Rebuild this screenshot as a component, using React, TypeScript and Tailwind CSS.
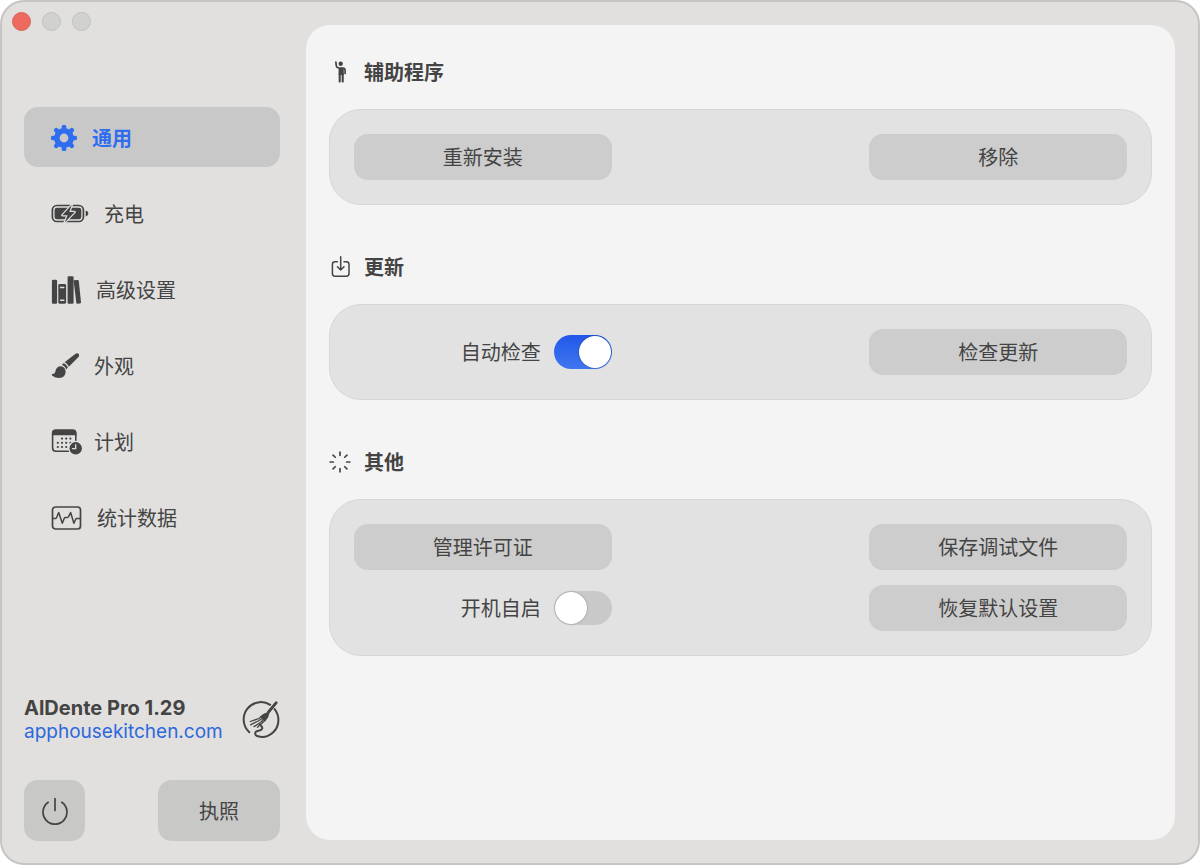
import React, { useState } from 'react';
import { clsx } from 'clsx';

const GearIcon = () => (
  <svg width="26" height="26" viewBox="-13 -13 26 26" stroke="currentColor" fill="none" className="shrink-0">
    <circle r="7.2" strokeWidth="5.6" />
    {[0, 45, 90, 135, 180, 225, 270, 315].map((angle) => (
      <path key={angle} d="M0 -9V-11" strokeWidth="4.6" strokeLinecap="round" transform={`rotate(${angle})`} />
    ))}
  </svg>
);

const BatteryIcon = () => (
  <svg width="38" height="19" viewBox="0 0 38 19" fill="currentColor" className="shrink-0">
    <rect x="1.4" y="1.5" width="31" height="16" rx="4.5" fill="none" stroke="currentColor" strokeWidth="1.7" />
    <rect x="3.6" y="3.7" width="26.7" height="11.6" rx="2.4" />
    <path d="M34.7 6.6c1.6.4 2.6 1.5 2.6 2.9s-1 2.5-2.6 2.9z" />
    <path
      d="M20.7 1L11.3 11.2h5.3l-2.9 7.2L23.7 8h-5.4z"
      stroke="#e1e0de"
      strokeWidth="2.4"
      paintOrder="stroke"
      strokeLinejoin="round"
    />
  </svg>
);

const BooksIcon = () => (
  <svg width="30" height="30" viewBox="0 0 30 30" fill="currentColor" className="shrink-0">
    <rect x="0.9" y="4.7" width="5.2" height="24" rx="1.2" />
    <rect x="7.3" y="9" width="7.8" height="19.7" rx="1.4" />
    <path d="M9.6 12.4h3.2M9.6 25.3h3.2" stroke="#e1e0de" strokeWidth="1.5" strokeLinecap="round" />
    <rect x="16.6" y="1.3" width="6" height="27.4" rx="1.2" />
    <path d="M22.6 5.3l4.1-.4q1 0 1.1 1l2.2 21.3q.1 1.1-1 1.2l-2.6.3q-1 0-1.1-1z" />
  </svg>
);

const BrushIcon = () => (
  <svg width="28" height="28" viewBox="0 0 28 28" fill="currentColor" className="shrink-0">
    <path d="M27.6 1.8c-.9-.9-2.3-.8-3.4.1L13.6 10.3c1.9.8 3.3 2.2 4.2 4.5L27.5 4.9c.9-1 .9-2.3.1-3.1z" />
    <path d="M12.6 11.2l-1.9 1.6c2.2.8 3.7 2.3 4.5 4.7l1.7-1.9c-.8-2.2-2.2-3.7-4.3-4.4z" />
    <path d="M9.7 14.2c-2.9 0-4.9 2.1-5.2 4.800-.2 1.900-1.300 2.900-3.100 3.100-.8.1-.9.8-.3 1.300 4 3.300 9.800 3.300 12.200.3 2.800-3.500 1-9.500-3.600-9.500z" />
  </svg>
);

const CalendarIcon = () => (
  <svg width="32" height="28" viewBox="0 0 32 28" fill="currentColor" className="-mr-1 shrink-0">
    <rect x="1.6" y="2.4" width="23.2" height="20.8" rx="3.2" fill="none" stroke="currentColor" strokeWidth="1.6" />
    <path d="M1 7.2V5Q1 1.6 4.5 1.6H22Q25.400 1.6 25.400 5V7.200z" />
    {[
      [11, 10.6], [15.2, 10.6], [19.4, 10.6],
      [6.8, 14.8], [11, 14.8], [15.2, 14.8], [19.4, 14.8],
      [6.8, 19], [11, 19], [15.2, 19],
    ].map(([cx, cy]) => (
      <circle key={`${cx}-${cy}`} cx={cx} cy={cy} r="1.1" />
    ))}
    <circle cx="24.7" cy="20.3" r="7.5" fill="#e1e0de" />
    <circle cx="24.7" cy="20.3" r="6.2" />
    <path d="M24.7 16.7v4h-3.2" fill="none" stroke="#e1e0de" strokeWidth="1.3" strokeLinecap="round" />
  </svg>
);

const ChartIcon = () => (
  <svg width="31" height="24" viewBox="0 0 31 24" fill="none" stroke="currentColor" strokeWidth="1.7" className="shrink-0">
    <rect x="1.5" y="1" width="28" height="22" rx="3" />
    <path
      d="M1.500 12.500H4.500Q5.200 12.500 5.500 11.800L7.700 6.500L11.300 17.300L13.300 12.200Q13.600 11.500 14.300 11.500H16.400Q17.200 11.500 17.500 10.800L19.600 6.500L22.900 17.300L24.700 13.200Q25 12.500 25.700 12.500H29.500"
      strokeWidth="1.5"
      strokeLinejoin="round"
    />
  </svg>
);

const PersonIcon = () => (
  <svg width="22" height="24" viewBox="-2 0 22 24" stroke="currentColor" fill="none" strokeLinecap="round">
    <circle cx="9.7" cy="3.7" r="2.2" fill="currentColor" stroke="none" />
    <path d="M4.9 2.2L5.3 5.800Q5.500 7.500 8 8H12Q14.100 8.200 14.100 10.200V13.400" strokeWidth="1.7" />
    <path d="M7.6 8H12.8V15H7.6z" fill="currentColor" stroke="none" />
    <path d="M8.7 14V21.600M11.700 14V21.600" strokeWidth="2.1" />
  </svg>
);

const DownloadIcon = () => (
  <svg width="22" height="24" viewBox="-2 -1 22 24" stroke="currentColor" fill="none" strokeWidth="1.5" strokeLinecap="round">
    <path d="M6.4 5.8H4Q1.400 5.800 1.400 8.400V17.600Q1.400 20.200 4 20.200H15.400Q18 20.200 18 17.600V8.400Q18 5.800 15.400 5.800H13" />
    <path d="M9.7 .8V13.700M6.400 10.700L9.700 14L13 10.700" strokeLinejoin="round" />
  </svg>
);

const RaysIcon = () => (
  <svg width="22" height="24" viewBox="-11 -12 22 24" stroke="currentColor" strokeWidth="1.7" strokeLinecap="round">
    {[0, 45, 90, 135, 180, 225, 270, 315].map((angle) => (
      <path key={angle} d="M0 -6.700V-9.800" transform={`rotate(${angle})`} />
    ))}
  </svg>
);

const ForkLogo = () => (
  <svg width="38" height="40" viewBox="0 0 38 40" fill="none" stroke="currentColor" strokeWidth="2" strokeLinecap="round" className="shrink-0">
    <path d="M7.300 32.200A17.300 17.300 0 0 1 28.200 4.800" />
    <path d="M32.600 9.100C38.200 16 37.600 26.500 31 32.500C26 37 20 37.500 16 36.300C12.200 35.100 12.400 31.600 15.500 31C19 30.400 21.500 29 19.600 26.400L17.800 24.600" />
    <path d="M34.300 2.700L26.500 12" strokeWidth="2.800" />
    <path d="M27.500 11C27 14.500 27 17 24.800 19.200L22.500 21.300L18.500 17.300L20.300 14.800C22.300 12.800 24.500 13.200 27.500 11z" fill="currentColor" stroke="none" />
    <path d="M20.300 15.500L17 18.500L8.300 21.500M21 18L16.200 21L8.600 24.800M22.500 18.500L18.500 22.500L12 26.600M23.500 20L15.500 27.300" strokeWidth="1.300" />
  </svg>
);

const PowerIcon = () => (
  <svg width="28" height="28" viewBox="0 0 28 28" fill="none" stroke="currentColor" strokeWidth="1.7" strokeLinecap="round">
    <path d="M14 1.600V13.500M7.200 5.300A12 12 0 1 0 20.800 5.300" />
  </svg>
);

const navItems = [
  { id: 'general', label: '通用', icon: GearIcon },
  { id: 'charging', label: '充电', icon: BatteryIcon },
  { id: 'advanced', label: '高级设置', icon: BooksIcon },
  { id: 'appearance', label: '外观', icon: BrushIcon },
  { id: 'schedule', label: '计划', icon: CalendarIcon },
  { id: 'statistics', label: '统计数据', icon: ChartIcon },
];

interface SectionProps {
  title: string;
  icon: React.FC;
  children: React.ReactNode;
}

const Section: React.FC<SectionProps> = ({ title, icon: Icon, children }) => (
  <section>
    <h2 className="mb-6 flex h-[26px] items-center gap-[13px] font-bold">
      <Icon />
      {title}
    </h2>
    <div className="grid grid-cols-3 items-center gap-y-[15px] rounded-[32px] border border-[#d6d6d6] bg-[#e2e2e2] p-6">
      {children}
    </div>
  </section>
);

const ActionButton: React.FC<{ label: string; last?: boolean }> = ({ label, last }) => (
  <button
    className={clsx('h-[46px] rounded-[14px] bg-[#cdcdcd] hover:bg-[#c6c6c6]', last && 'col-start-3')}
  >
    {label}
  </button>
);

interface ToggleProps {
  label: string;
  checked: boolean;
  onChange: (checked: boolean) => void;
}

const Toggle: React.FC<ToggleProps> = ({ label, checked, onChange }) => (
  <label className="flex items-center justify-end gap-[13px]">
    {label}
    <input
      type="checkbox"
      checked={checked}
      onChange={(e) => onChange(e.target.checked)}
      className="h-[34px] w-[58px] appearance-none rounded-full bg-[#c9c9c9] p-px before:block before:size-8 before:rounded-full before:bg-white before:shadow-[0_0_2px_rgba(0,0,0,0.4)] checked:bg-linear-to-b checked:from-[#2257ea] checked:to-[#4076ee] checked:before:translate-x-6"
    />
  </label>
);

export default function App() {
  const [active, setActive] = useState('general');
  const [autoCheck, setAutoCheck] = useState(true);
  const [launchAtLogin, setLaunchAtLogin] = useState(false);

  return (
    <div className="bg-white">
      <div className="flex min-h-screen rounded-[24px] border-2 border-[#c6c5c3] bg-[#e1e0de] font-['Noto_Sans_CJK_SC',sans-serif] text-[20px] leading-6 text-[#444444]">
        <aside className="flex w-[304px] shrink-0 flex-col pb-[22px] pl-[22px] pr-[26px]">
          <div className="-ml-3 flex gap-[11px] pt-[10px]">
            <button aria-label="关闭" className="size-[19px] rounded-full border border-[#dc6156] bg-[#ed6a5e]" />
            <button aria-label="最小化" className="size-[19px] rounded-full border border-[#c1c1c0] bg-[#d1d1d0]" />
            <button aria-label="缩放" className="size-[19px] rounded-full border border-[#c1c1c0] bg-[#d1d1d0]" />
          </div>

          <nav className="mt-[76px] flex flex-col gap-4">
            {navItems.map(({ id, label, icon: Icon }) => (
              <button
                key={id}
                onClick={() => setActive(id)}
                className={clsx(
                  'flex h-[60px] items-center gap-[15px] rounded-[14px] pl-[27px] pt-px',
                  id === active && 'bg-[#c8c8c8] font-bold text-[#2f6df0]'
                )}
              >
                <Icon />
                {label}
              </button>
            ))}
          </nav>

          <div className="mt-auto flex items-center justify-between">
            <div className="font-[Inter,sans-serif]">
              <p className="font-bold">AlDente Pro 1.29</p>
              <a href="#" className="block text-[19px] text-[#2d68dc]">apphousekitchen.com</a>
            </div>
            <ForkLogo />
          </div>

          <div className="mt-9 flex justify-between">
            <button aria-label="退出" className="flex size-[61px] items-center justify-center rounded-[14px] bg-[#c8c8c7]">
              <PowerIcon />
            </button>
            <button className="h-[61px] w-[122px] rounded-[14px] bg-[#c8c8c7]">执照</button>
          </div>
        </aside>

        <main className="my-[23px] mr-[23px] flex flex-1 flex-col gap-[49px] rounded-[24px] bg-[#f4f4f4] px-[23px] py-[34px]">
          <Section title="辅助程序" icon={PersonIcon}>
            <ActionButton label="重新安装" />
            <ActionButton label="移除" last />
          </Section>

          <Section title="更新" icon={DownloadIcon}>
            <Toggle label="自动检查" checked={autoCheck} onChange={setAutoCheck} />
            <ActionButton label="检查更新" last />
          </Section>

          <Section title="其他" icon={RaysIcon}>
            <ActionButton label="管理许可证" />
            <ActionButton label="保存调试文件" last />
            <Toggle label="开机自启" checked={launchAtLogin} onChange={setLaunchAtLogin} />
            <ActionButton label="恢复默认设置" last />
          </Section>
        </main>
      </div>
    </div>
  );
}
